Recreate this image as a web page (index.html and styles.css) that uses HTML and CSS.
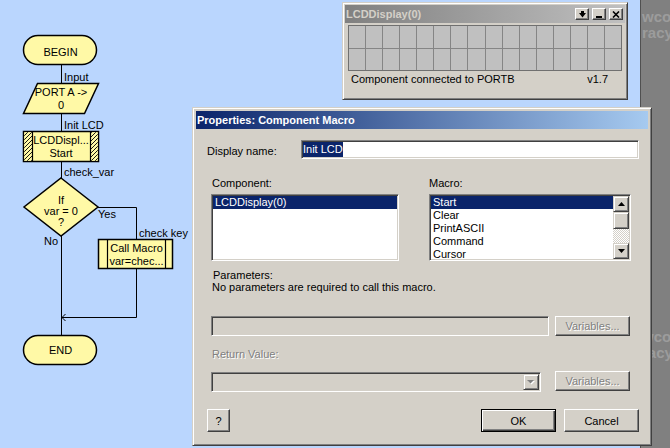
FILE: index.html
```html
<!DOCTYPE html>
<html>
<head>
<meta charset="utf-8">
<link rel="stylesheet" href="styles.css">
</head>
<body>
<svg class="flow" width="190" height="448" viewBox="0 0 190 448">
  <defs>
    <pattern id="hatch" width="4" height="4" patternUnits="userSpaceOnUse">
      <rect width="4" height="4" fill="#FFF9A6"/>
      <path d="M-1 1 L1 -1 M0 4 L4 0 M3 5 L5 3" stroke="#000" stroke-width="0.9"/>
    </pattern>
  </defs>
  <g stroke="#000" stroke-width="1" fill="none">
    <path d="M61.5 65 V83 M61.5 113 V131 M61.5 161 V178 M61.5 236 V335 M98 207.5 H136.5 V239 M136.5 269 V317.5 H61.5 M65.5 314 L62 317.5 L65.5 321"/>
  </g>
  <g fill="#FFF9A6" stroke="#000" stroke-width="1.5">
    <rect x="23.5" y="35.5" width="73" height="29" rx="14.5"/>
    <polygon points="37.5,83.5 98.5,83.5 84.5,113.5 23.5,113.5"/>
    <rect x="23.5" y="131.5" width="75" height="30"/>
    <polygon points="61,178 98,207 61,236 24,207"/>
    <rect x="98.5" y="239.5" width="74" height="29"/>
    <rect x="23.5" y="335.5" width="73" height="29" rx="14.5"/>
  </g>
  <rect x="24.3" y="132.3" width="7.7" height="28.4" fill="url(#hatch)"/>
  <rect x="91" y="132.3" width="6.7" height="28.4" fill="url(#hatch)"/>
  <g stroke="#000" stroke-width="1.2">
    <path d="M32.5 131.5 V161.5 M90.5 131.5 V161.5 M107.5 239.5 V268.5 M165.5 239.5 V268.5"/>
  </g>
  <g font-family="Liberation Sans, Arial, sans-serif" font-size="11" fill="#000">
    <text x="60.5" y="56" text-anchor="middle">BEGIN</text>
    <text x="64" y="81">Input</text>
    <text x="61" y="96" text-anchor="middle">PORT A -&gt;</text>
    <text x="61" y="109" text-anchor="middle">0</text>
    <text x="64" y="129">Init LCD</text>
    <text x="61" y="144" text-anchor="middle">LCDDispl...</text>
    <text x="61" y="157" text-anchor="middle">Start</text>
    <text x="64" y="176">check_var</text>
    <text x="61" y="204" text-anchor="middle">If</text>
    <text x="61" y="215" text-anchor="middle">var = 0</text>
    <text x="61" y="226" text-anchor="middle">?</text>
    <text x="98" y="218">Yes</text>
    <text x="139" y="237">check key</text>
    <text x="44" y="245">No</text>
    <text x="136.5" y="252" text-anchor="middle">Call Macro</text>
    <text x="136.5" y="265" text-anchor="middle">var=chec...</text>
    <text x="60.5" y="354" text-anchor="middle">END</text>
  </g>
</svg>

<div class="sidepanel">
  <div class="ghost">wcod<br>racy</div>
  <div class="ghost ghost-low">wcod<br>racy</div>
</div>

<div class="lcdwin">
  <div class="caption">
    <span class="ctitle">LCDDisplay(0)</span>
    <span class="cbtns">
      <span class="cbtn"><svg width="9" height="7" viewBox="0 0 9 7"><path d="M1 2 H3 V0 H6 V2 H8 L4.5 6.5 Z" fill="#000"/></svg></span>
      <span class="cbtn"><svg width="8" height="7" viewBox="0 0 8 7"><rect x="1" y="5" width="6" height="2" fill="#000"/></svg></span>
      <span class="cbtn"><svg width="8" height="7" viewBox="0 0 8 7"><path d="M1 0.5 L7 6.5 M7 0.5 L1 6.5" stroke="#000" stroke-width="1.6"/></svg></span>
    </span>
  </div>
  <div class="lcdgrid">
    <i></i><i></i><i></i><i></i><i></i><i></i><i></i><i></i><i></i><i></i><i></i><i></i><i></i><i></i><i></i><i></i>
    <i></i><i></i><i></i><i></i><i></i><i></i><i></i><i></i><i></i><i></i><i></i><i></i><i></i><i></i><i></i><i></i>
  </div>
  <div class="status"><span>Component connected to PORTB</span><span>v1.7</span></div>
</div>

<div class="dialog">
  <div class="titlebar">Properties: Component Macro</div>
  <div class="dbody">
    <div class="name-row">
      <span class="name-lbl">Display name:</span>
      <div class="textbox"><span class="sel">Init LCD</span></div>
    </div>
    <div class="lists">
      <div class="col col-comp">
        <div class="collbl">Component:</div>
        <div class="listbox">
          <div class="items">
            <div class="item selected">LCDDisplay(0)</div>
          </div>
        </div>
      </div>
      <div class="col col-macro">
        <div class="collbl">Macro:</div>
        <div class="listbox">
          <div class="items">
            <div class="item selected">Start</div>
            <div class="item">Clear</div>
            <div class="item">PrintASCII</div>
            <div class="item">Command</div>
            <div class="item">Cursor</div>
          </div>
          <div class="scrollbar">
            <div class="raised sb-btn"><svg width="7" height="4" viewBox="0 0 7 4"><polygon points="3.5,0 7,4 0,4" fill="#000"/></svg></div>
            <div class="raised sb-thumb"></div>
            <div class="sb-track"></div>
            <div class="raised sb-btn"><svg width="7" height="4" viewBox="0 0 7 4"><polygon points="0,0 7,0 3.5,4" fill="#000"/></svg></div>
          </div>
        </div>
      </div>
    </div>
    <div class="params"><span class="p1">Parameters:</span><br>No parameters are required to call this macro.</div>
    <div class="field-row">
      <div class="field"></div>
      <div class="btn disabled">Variables...</div>
    </div>
    <div class="retlbl disabled">Return Value:</div>
    <div class="combo-row">
      <div class="combo">
        <div class="raised drop"><svg width="8" height="5" viewBox="0 0 8 5"><polygon points="1,1 8,1 4.5,4.5" fill="#fff"/><polygon points="0,0 7,0 3.5,3.5" fill="#808080"/></svg></div>
      </div>
      <div class="btn disabled btn-up">Variables...</div>
    </div>
    <div class="btn-row">
      <div class="btn help">?</div>
      <div class="btn ok">OK</div>
      <div class="btn cancel">Cancel</div>
    </div>
  </div>
</div>
</body>
</html>
```
FILE: styles.css
```css
* { box-sizing: border-box; }

body {
  margin: 0;
  width: 670px;
  height: 448px;
  overflow: hidden;
  position: relative;
  background: #BAD6FE;
  font-family: "Liberation Sans", Arial, sans-serif;
  font-size: 11px;
  color: #000;
}

.flow {
  position: absolute;
  left: 0;
  top: 0;
}

/* right side background window */
.sidepanel {
  position: absolute;
  left: 640px;
  top: 0;
  width: 30px;
  height: 448px;
  background: #808080;
  border-left: 1px solid #505050;
  overflow: hidden;
  padding: 9px 0 0 1px;
}
.ghost {
  font-size: 15px;
  font-weight: bold;
  line-height: 16px;
  color: #9C9C9C;
  white-space: nowrap;
}
.ghost-low { margin-top: 288px; }

/* raised / sunken helpers */
.raised {
  background: #D4D0C8;
  border: 1px solid;
  border-color: #D4D0C8 #404040 #404040 #D4D0C8;
  box-shadow: inset 1px 1px #fff, inset -1px -1px #808080;
  display: flex;
  align-items: center;
  justify-content: center;
}

/* LCD window */
.lcdwin {
  position: absolute;
  left: 342px;
  top: 2px;
  width: 286px;
  height: 98px;
  background: #D4D0C8;
  border: 1px solid;
  border-color: #D4D0C8 #404040 #404040 #D4D0C8;
  box-shadow: inset 1px 1px #fff, inset -1px -1px #808080;
  padding: 2px;
}
.caption {
  height: 18px;
  background: linear-gradient(90deg, #808080, #C0C0C0);
  display: flex;
  align-items: center;
  justify-content: space-between;
  padding: 0 2px 0 1px;
}
.ctitle {
  color: #D4D0C8;
  font-weight: bold;
  font-size: 11px;
  line-height: 18px;
}
.cbtns { display: flex; gap: 3px; }
.cbtn {
  width: 14px;
  height: 12px;
  background: #D4D0C8;
  border: 1px solid;
  border-color: #fff #404040 #404040 #fff;
  box-shadow: inset -1px -1px #808080;
  display: flex;
  align-items: center;
  justify-content: center;
}
.lcdgrid {
  margin: 2px 0 0 3px;
  width: 274px;
  height: 46px;
  display: grid;
  grid-template-columns: repeat(16, 1fr);
  grid-template-rows: 1fr 1fr;
  gap: 1px;
  background: #858585;
  border: 1px solid #707070;
}
.lcdgrid i { background: #C0C0C0; }
.status {
  display: flex;
  justify-content: space-between;
  padding: 0 17px 0 6px;
  margin-top: 2px;
  line-height: 13px;
}

/* Dialog */
.dialog {
  position: absolute;
  left: 192px;
  top: 107px;
  width: 460px;
  height: 339px;
  background: #D4D0C8;
  border: 1px solid;
  border-color: #D4D0C8 #404040 #404040 #D4D0C8;
  box-shadow: inset 1px 1px #fff, inset -1px -1px #808080;
  padding: 3px;
}
.titlebar {
  height: 18px;
  line-height: 18px;
  background: linear-gradient(90deg, #0A246A, #A6CAF0);
  color: #fff;
  font-weight: bold;
  font-size: 11px;
  padding-left: 1px;
}

.sunken {
  border: 1px solid;
}

.name-row {
  display: flex;
  margin-top: 11px;
  height: 19px;
}
.name-lbl {
  width: 105px;
  padding-left: 11px;
  padding-top: 5px;
  line-height: 13px;
}
.textbox {
  width: 338px;
  height: 19px;
  background: #fff;
  border: 1px solid;
  border-color: #808080 #fff #fff #808080;
  box-shadow: inset 1px 1px #404040, inset -1px -1px #D4D0C8;
  padding: 1px 0 0 1px;
}
.sel {
  display: inline-block;
  background: #0A246A;
  color: #fff;
  line-height: 15px;
  height: 15px;
}

.lists {
  display: flex;
  margin-top: 18px;
  padding-left: 15px;
  gap: 30px;
}
.col-comp { width: 188px; }
.col-macro { width: 202px; }
.col-comp .collbl { padding-left: 1px; }
.collbl {
  line-height: 13px;
  height: 13px;
  margin-bottom: 4px;
}
.listbox {
  height: 67px;
  background: #fff;
  border: 1px solid;
  border-color: #808080 #fff #fff #808080;
  box-shadow: inset 1px 1px #404040, inset -1px -1px #D4D0C8;
  padding: 1px;
  display: flex;
  overflow: hidden;
}
.items { flex: 1; overflow: hidden; }
.item {
  line-height: 13px;
  height: 13px;
  padding-left: 2px;
  white-space: nowrap;
}
.item.selected { background: #0A246A; color: #fff; }
.scrollbar {
  width: 16px;
  display: flex;
  flex-direction: column;
}
.sb-btn { height: 16px; }
.sb-thumb { height: 17px; }
.sb-track {
  flex: 1;
  background: repeating-conic-gradient(#fff 0 25%, #D4D0C8 0 50%) 0 0 / 2px 2px;
}

.params {
  margin-top: 8px;
  padding-left: 16px;
  line-height: 12px;
}
.p1 { margin-left: 1px; }

.field-row {
  display: flex;
  margin-top: 23px;
  padding-left: 15px;
  gap: 6px;
  align-items: flex-start;
}
.field {
  width: 338px;
  height: 20px;
  background: #D4D0C8;
  border: 1px solid;
  border-color: #808080 #fff #fff #808080;
  box-shadow: inset 1px 1px #404040, inset -1px -1px #D4D0C8;
}

.btn {
  width: 75px;
  height: 20px;
  background: #D4D0C8;
  border: 1px solid;
  border-color: #fff #404040 #404040 #fff;
  box-shadow: inset -1px -1px #808080;
  display: flex;
  align-items: center;
  justify-content: center;
}
.disabled {
  color: #808080;
  text-shadow: 1px 1px 0 #fff;
}

.retlbl {
  margin-top: 12px;
  padding-left: 16px;
  line-height: 13px;
}

.combo-row {
  display: flex;
  margin-top: 11px;
  padding-left: 15px;
  gap: 14px;
  align-items: flex-start;
}
.combo {
  width: 330px;
  height: 20px;
  background: #D4D0C8;
  border: 1px solid;
  border-color: #808080 #fff #fff #808080;
  box-shadow: inset 1px 1px #404040, inset -1px -1px #D4D0C8;
  padding: 1px;
  display: flex;
  justify-content: flex-end;
}
.drop {
  width: 16px;
  height: 16px;
  border-color: #D4D0C8 #404040 #404040 #D4D0C8;
}
.btn-up { margin-top: -1px; }

.btn-row {
  display: flex;
  margin-top: 17px;
  padding-left: 11px;
  padding-right: 9px;
}
.btn-row .btn { height: 23px; }
.help { width: 23px !important; }
.ok {
  margin-left: auto;
  border: 1px solid #000 !important;
  box-shadow: inset 1px 1px #fff, inset -1px -1px #404040, inset -2px -2px #808080;
}
.cancel { margin-left: 8px; }
```
